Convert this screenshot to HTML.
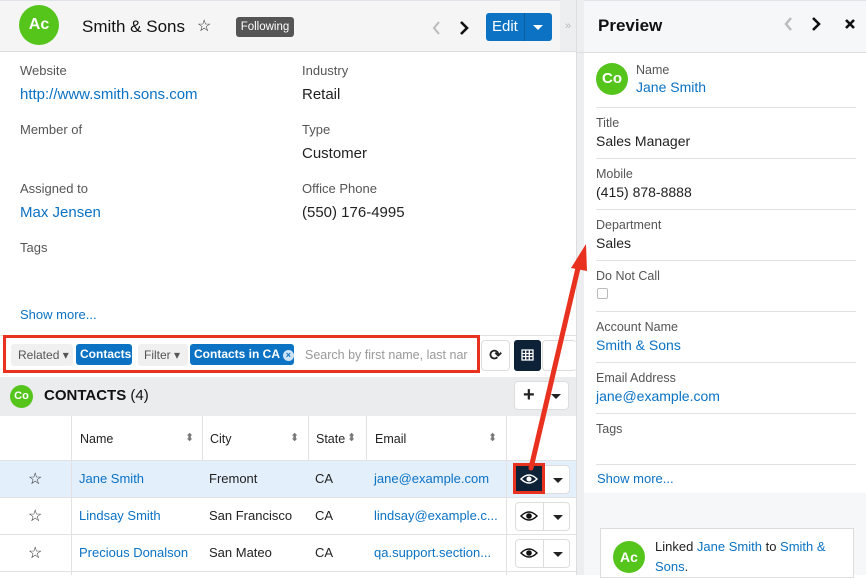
<!DOCTYPE html><html><head><style>
*{margin:0;padding:0;box-sizing:border-box}
body{width:866px;height:575px;overflow:hidden;font-family:"Liberation Sans",sans-serif;background:#fff;position:relative;color:#222}
.a{position:absolute;white-space:nowrap}
.lbl{font-size:13px;color:#555}
.val{font-size:15px;color:#222}
.lnk{color:#0b72c4}
.av{border-radius:50%;background:#55c51c;color:#fff;text-align:center;font-weight:bold}
.hl{position:absolute;height:1px;background:#e2e2e2}
.vl{position:absolute;width:1px;background:#e2e2e2}
.btn{position:absolute;border:1px solid #ddd;border-radius:4px;background:#fff}
</style></head><body>
<div class="a" style="left:0;top:0;width:560px;height:52px;background:#f5f5f5;border-bottom:1px solid #ddd;border-top:1px solid #e0e4e8"></div>
<div class="a" style="left:560px;top:0;width:17px;height:52px;background:#eceeef;border-bottom:1px solid #ddd;color:#bbb;font-size:11px;padding:20px 0 0 5px">»</div>
<div class="a av" style="left:19px;top:5px;width:40px;height:40px;line-height:40px;font-size:16px">Ac</div>
<div class="a" style="left:82px;top:17px;font-size:17px;color:#111">Smith &amp; Sons</div>
<div class="a" style="left:197px;top:16px;font-size:16px">☆</div>
<div class="a" style="left:236px;top:17px;width:58px;height:20px;background:#555;color:#fff;font-size:11.5px;border-radius:3px;text-align:center;line-height:20px">Following</div>
<svg class="a" style="left:430px;top:18px" width="40" height="20"><path d="M9 4L4 10L9 16" fill="none" stroke="#bbb" stroke-width="2"/><path d="M31 4L37 10L31 16" fill="none" stroke="#111" stroke-width="2.6"/></svg>
<div class="a" style="left:486px;top:13px;width:66px;height:28px;background:#0b72c4;border-radius:3px;color:#fff"><span class="a" style="left:6px;top:5px;font-size:15px">Edit</span><span class="a" style="left:38px;top:0;width:1px;height:28px;background:#0a5ea0"></span><span class="a" style="left:47px;top:12px;border:5px solid transparent;border-top-color:#fff"></span></div>
<div class="a lbl" style="left:20px;top:63px">Website</div>
<div class="a val lnk" style="left:20px;top:86px">http://www.smith.sons.com</div>
<div class="a lbl" style="left:302px;top:63px">Industry</div>
<div class="a val" style="left:302px;top:86px">Retail</div>
<div class="a lbl" style="left:20px;top:122px">Member of</div>
<div class="a lbl" style="left:302px;top:122px">Type</div>
<div class="a val" style="left:302px;top:145px">Customer</div>
<div class="a lbl" style="left:20px;top:181px">Assigned to</div>
<div class="a val lnk" style="left:20px;top:204px">Max Jensen</div>
<div class="a lbl" style="left:302px;top:181px">Office Phone</div>
<div class="a val" style="left:302px;top:204px">(550) 176-4995</div>
<div class="a lbl" style="left:20px;top:240px">Tags</div>
<div class="a lbl lnk" style="left:20px;top:307px">Show more...</div>
<div class="hl" style="left:0;top:335px;width:577px"></div>
<div class="a" style="left:0;top:336px;width:577px;height:41px;background:#fff"></div>
<div class="a" style="left:3px;top:335px;width:477px;height:38px;border:3px solid #e8321f;background:#fff"></div>
<div class="a" style="left:11px;top:344px;width:62px;height:22px;background:#f0f0f0;border-radius:3px;font-size:12px;color:#555;padding:4px 7px">Related ▾</div>
<div class="a" style="left:76px;top:344px;width:56px;height:21px;background:#0b72c4;border-radius:3px;font-size:12px;color:#fff;font-weight:bold;padding:3px 4px">Contacts</div>
<div class="a" style="left:138px;top:344px;width:50px;height:22px;background:#f0f0f0;border-radius:3px;font-size:12px;color:#555;padding:4px 6px">Filter ▾</div>
<div class="a" style="left:190px;top:344px;width:104px;height:21px;background:#0b72c4;border-radius:3px;font-size:12px;color:#fff;font-weight:bold;padding:3px 4px">Contacts in CA <span style="display:inline-block;width:11px;height:11px;border-radius:50%;background:#cfe3f5;color:#0b72c4;font-size:9px;line-height:11px;text-align:center">×</span></div>
<div class="a" style="left:305px;top:348px;font-size:12.5px;color:#999">Search by first name, last nar</div>
<div class="btn" style="left:481px;top:340px;width:29px;height:31px;font-size:15px;font-weight:bold;text-align:center;line-height:29px">⟳</div>
<div class="a" style="left:514px;top:340px;width:27px;height:31px;background:#0d2137;border-radius:3px"><svg width="27" height="31"><g fill="none" stroke="#fff" stroke-width="1.3"><rect x="8" y="10" width="11" height="10"/><path d="M8 13.5h11M8 16.5h11M11.7 10v10M15.3 10v10"/></g></svg></div>
<div class="btn" style="left:542px;top:340px;width:35px;height:31px;border-right:none"></div>
<div class="a" style="left:0;top:377px;width:577px;height:39px;background:#ebecee"></div>
<div class="a av" style="left:10px;top:385px;width:23px;height:23px;line-height:23px;font-size:11px">Co</div>
<div class="a" style="left:44px;top:387px;font-size:15px;color:#111"><b>CONTACTS</b> (4)</div>
<div class="btn" style="left:514px;top:381px;width:55px;height:29px"><span class="a" style="left:8px;top:2px;font-size:20px;font-weight:bold">+</span><span class="a" style="left:36px;top:12px;border:5px solid transparent;border-top-color:#222"></span></div>
<div class="hl" style="left:0;top:460px;width:577px"></div>
<div class="a" style="left:0;top:461px;width:577px;height:36px;background:#e3effb"></div>
<div class="hl" style="left:0;top:497px;width:577px"></div>
<div class="hl" style="left:0;top:534px;width:577px"></div>
<div class="hl" style="left:0;top:571px;width:577px"></div>
<div class="vl" style="left:71px;top:416px;height:159px"></div>
<div class="vl" style="left:202px;top:416px;height:44px"></div>
<div class="vl" style="left:308px;top:416px;height:44px"></div>
<div class="vl" style="left:366px;top:416px;height:44px"></div>
<div class="vl" style="left:506px;top:416px;height:159px"></div>
<div class="vl" style="left:576px;top:0;height:575px;background:#ddd"></div>
<div class="a" style="left:80px;top:432px;font-size:12.5px">Name</div><div class="a" style="left:185px;top:431px;font-size:11px;color:#777">⬍</div>
<div class="a" style="left:210px;top:432px;font-size:12.5px">City</div><div class="a" style="left:290px;top:431px;font-size:11px;color:#777">⬍</div>
<div class="a" style="left:316px;top:432px;font-size:12.5px">State</div><div class="a" style="left:347px;top:431px;font-size:11px;color:#777">⬍</div>
<div class="a" style="left:375px;top:432px;font-size:12.5px">Email</div><div class="a" style="left:488px;top:431px;font-size:11px;color:#777">⬍</div>
<div class="a" style="left:28px;top:469px;font-size:16px">☆</div>
<div class="a lnk" style="left:79px;top:471px;font-size:13px">Jane Smith</div>
<div class="a" style="left:209px;top:471px;font-size:13px">Fremont</div>
<div class="a" style="left:315px;top:471px;font-size:13px">CA</div>
<div class="a lnk" style="left:374px;top:471px;font-size:13px">jane@example.com</div>
<div class="a" style="left:28px;top:506px;font-size:16px">☆</div>
<div class="a lnk" style="left:79px;top:508px;font-size:13px">Lindsay Smith</div>
<div class="a" style="left:209px;top:508px;font-size:13px">San Francisco</div>
<div class="a" style="left:315px;top:508px;font-size:13px">CA</div>
<div class="a lnk" style="left:374px;top:508px;font-size:13px">lindsay@example.c...</div>
<div class="a" style="left:28px;top:543px;font-size:16px">☆</div>
<div class="a lnk" style="left:79px;top:545px;font-size:13px">Precious Donalson</div>
<div class="a" style="left:209px;top:545px;font-size:13px">San Mateo</div>
<div class="a" style="left:315px;top:545px;font-size:13px">CA</div>
<div class="a lnk" style="left:374px;top:545px;font-size:13px">qa.support.section...</div>
<div class="btn" style="left:515px;top:465px;width:55px;height:29px"><span class="a" style="left:37px;top:12px;border:5px solid transparent;border-top-color:#222"></span></div>
<div class="a" style="left:513px;top:463px;width:32px;height:31px;background:#0d2137;border:3px solid #e8321f"></div>
<div class="btn" style="left:515px;top:502px;width:55px;height:29px"><span class="a" style="left:27px;top:0;width:1px;height:27px;background:#ddd"></span><span class="a" style="left:37px;top:12px;border:5px solid transparent;border-top-color:#222"></span></div>
<div class="btn" style="left:515px;top:539px;width:55px;height:29px"><span class="a" style="left:27px;top:0;width:1px;height:27px;background:#ddd"></span><span class="a" style="left:37px;top:12px;border:5px solid transparent;border-top-color:#222"></span></div>
<svg class="a" style="left:0;top:0" width="577" height="575">
<g><path d="M521 479q8-8 16 0q-8 8-16 0z" fill="none" stroke="#fff" stroke-width="1.5"/><circle cx="529" cy="479" r="2.5" fill="#fff"/></g>
<g><path d="M521 516q8-8 16 0q-8 8-16 0z" fill="#fff" stroke="#111" stroke-width="1.5"/><circle cx="529" cy="516" r="2.8" fill="#111"/></g>
<g><path d="M521 553q8-8 16 0q-8 8-16 0z" fill="#fff" stroke="#111" stroke-width="1.5"/><circle cx="529" cy="553" r="2.8" fill="#111"/></g>
</svg>
<div class="a" style="left:577px;top:0;width:289px;height:575px;background:#f6f7f9;border-top:1px solid #e0e4e8"></div>
<div class="a" style="left:577px;top:0;width:7px;height:575px;background:#eceeef"></div>
<div class="hl" style="left:577px;top:52px;width:289px;background:#ddd"></div>
<div class="a" style="left:598px;top:16px;font-size:17px;font-weight:bold;color:#111">Preview</div>
<svg class="a" style="left:780px;top:14px" width="80" height="22"><path d="M792 0" /><path d="M11 4L6 10L11 16" fill="none" stroke="#bbb" stroke-width="2.4"/><path d="M33 4L39 10L33 16" fill="none" stroke="#111" stroke-width="2.6"/><path d="M66 6L74 14M74 6L66 14" stroke="#111" stroke-width="2.6"/></svg>
<div class="a" style="left:584px;top:53px;width:282px;height:440px;background:#fff"></div>
<div class="a av" style="left:596px;top:63px;width:32px;height:32px;line-height:32px;font-size:15px">Co</div>
<div class="a lbl" style="left:636px;top:63px;font-size:12.5px">Name</div>
<div class="a lnk" style="left:636px;top:79px;font-size:14px">Jane Smith</div>
<div class="hl" style="left:596px;top:107px;width:260px"></div>
<div class="a lbl" style="left:596px;top:116px;font-size:12.5px">Title</div>
<div class="a" style="left:596px;top:133px;font-size:14px">Sales Manager</div>
<div class="hl" style="left:596px;top:158px;width:260px"></div>
<div class="a lbl" style="left:596px;top:167px;font-size:12.5px">Mobile</div>
<div class="a" style="left:596px;top:184px;font-size:14px">(415) 878-8888</div>
<div class="hl" style="left:596px;top:209px;width:260px"></div>
<div class="a lbl" style="left:596px;top:218px;font-size:12.5px">Department</div>
<div class="a" style="left:596px;top:235px;font-size:14px">Sales</div>
<div class="hl" style="left:596px;top:260px;width:260px"></div>
<div class="a lbl" style="left:596px;top:269px;font-size:12.5px">Do Not Call</div>
<div class="a" style="left:597px;top:288px;width:11px;height:11px;border:1px solid #bbb;border-radius:2px"></div>
<div class="hl" style="left:596px;top:311px;width:260px"></div>
<div class="a lbl" style="left:596px;top:320px;font-size:12.5px">Account Name</div>
<div class="a lnk" style="left:596px;top:337px;font-size:14px">Smith &amp; Sons</div>
<div class="hl" style="left:596px;top:362px;width:260px"></div>
<div class="a lbl" style="left:596px;top:371px;font-size:12.5px">Email Address</div>
<div class="a lnk" style="left:596px;top:388px;font-size:14px">jane@example.com</div>
<div class="hl" style="left:596px;top:413px;width:260px"></div>
<div class="a lbl" style="left:596px;top:422px;font-size:12.5px">Tags</div>
<div class="hl" style="left:596px;top:464px;width:260px"></div>
<div class="a lnk" style="left:597px;top:471px;font-size:13px">Show more...</div>
<div class="a" style="left:600px;top:528px;width:254px;height:50px;background:#fff;border:1px solid #ddd"></div>
<div class="a av" style="left:613px;top:541px;width:32px;height:32px;line-height:32px;font-size:14px">Ac</div>
<div class="a" style="left:655px;top:537px;font-size:13px;line-height:20px;white-space:normal;width:180px">Linked <span class="lnk">Jane Smith</span> to <span class="lnk">Smith &amp; Sons</span>.</div>
<svg class="a" style="left:0;top:0" width="866" height="575"><line x1="531" y1="468" x2="578" y2="268" stroke="#e8321f" stroke-width="5" stroke-linecap="round"/><path d="M586 244L571 268L587 271Z" fill="#e8321f"/></svg>
</body></html>
